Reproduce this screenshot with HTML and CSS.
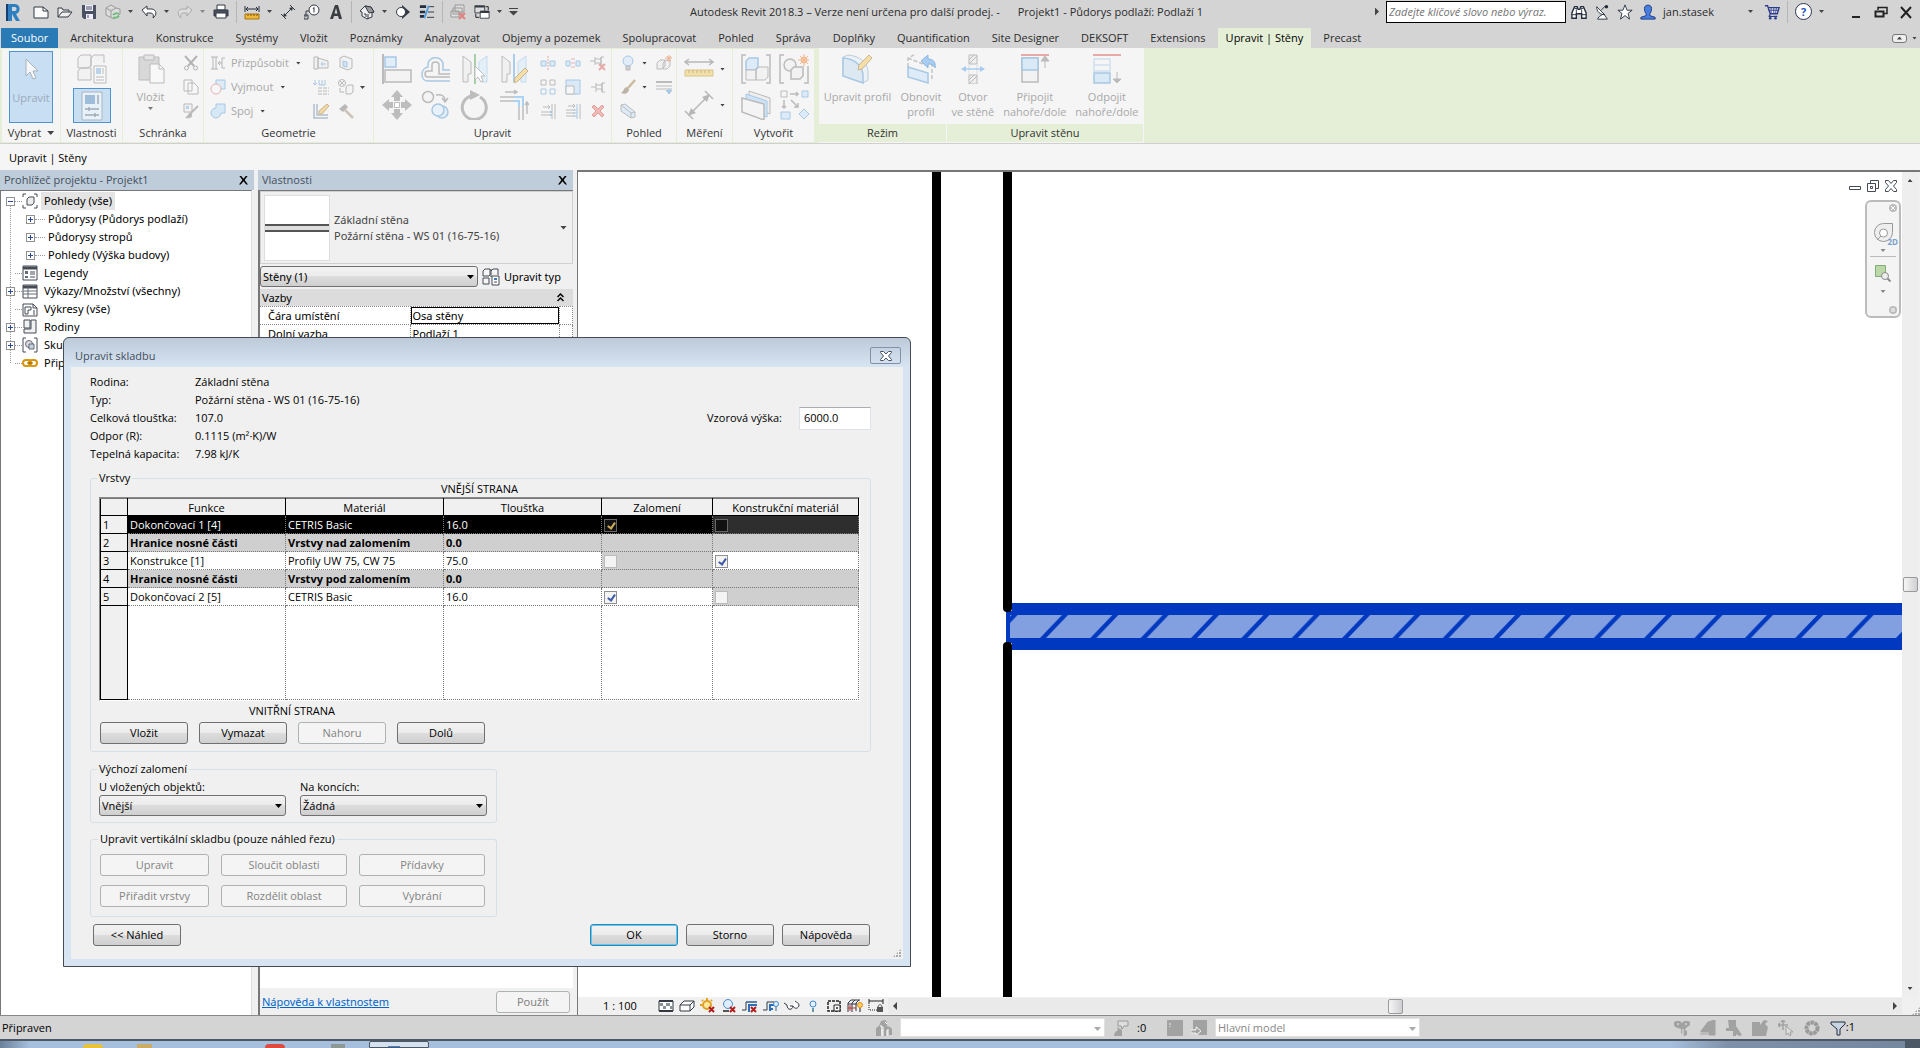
FILE: index.html
```html
<!DOCTYPE html>
<html lang="cs">

<head>
    <meta charset="UTF-8">
    <meta name="viewport" content="width=device-width, initial-scale=1.0">
    <title>Autodesk Revit 2018.3 - Projekt1</title>
    <link rel="stylesheet" href="styles.css">
</head>

<body>
    <!-- Icon symbols -->
    <svg class="sprite" aria-hidden="true">
        <!-- quick access -->
        <symbol id="i-revit" viewBox="0 0 16 18"><path d="M1 1h3v17H1z" fill="#163f70"/><path fill-rule="evenodd" d="M3 1h7c6 0 6 9 1 10l4 7h-4l-4-7v7H3zM7 4v4h3c2 0 2-4 0-4z" fill="#2f7fc1"/></symbol>
        <symbol id="i-new" viewBox="0 0 16 16"><path d="M1 3h9l5 4v7H1z" fill="#fbfbfb" stroke="#333a44"/><path d="M10 3v4h5" fill="none" stroke="#333a44"/></symbol>
        <symbol id="i-open" viewBox="0 0 16 16"><path d="M1 13V4h4l1 2h6v2M1 13l4-5h10l-4 5z" fill="#eee" stroke="#333a44"/></symbol>
        <symbol id="i-save" viewBox="0 0 16 16"><path d="M1 1h14v14H3l-2-2z" fill="#4a5160"/><path d="M4 1h8v6H4zM5 10h7v5H5z" fill="#eef"/><path d="M5 3h6M5 5h6M7 11v3" stroke="#4a5160"/></symbol>
        <symbol id="i-sync" viewBox="0 0 16 16"><path d="M1 4l5-3 5 3 4 1v5l-6 5-8-4zM1 4l5 3 5-3M6 7v6" fill="#ddd" stroke="#999"/><path d="M8 11a4 3 0 0 1 6-1m0 2a4 3 0 0 1-6 1" fill="none" stroke="#74bd80" stroke-width="2"/></symbol>
        <symbol id="i-undo" viewBox="0 0 16 16"><path d="M1 6l5-4v3h5c5 1 5 6 1 9 1-3 0-5-3-5H6v3z" fill="#fff" stroke="#333a44"/></symbol>
        <symbol id="i-redo" viewBox="0 0 16 16"><path d="M15 6l-5-4v3H5c-5 1-5 6-1 9-1-3 0-5 3-5h3v3z" fill="#ddd" stroke="#aaa"/></symbol>
        <symbol id="i-print" viewBox="0 0 16 16"><path d="M4 1h8v5H4z" fill="#fff" stroke="#333a44"/><path d="M1 6h14v6H1z" fill="#4a5160" stroke="#333a44"/><path d="M3 9h10v5H3z" fill="#fff" stroke="#333a44"/></symbol>
        <symbol id="i-measure" viewBox="0 0 16 16"><path d="M1 2v6M15 2v6M2 5h12M4 3L2 5l2 2M12 3l2 2-2 2" fill="none" stroke="#222c3c"/><path d="M1 10h14v5H1z" fill="#f0b83a" stroke="#a87410"/><path d="M4 10v2M7 10v2M10 10v2M13 10v2" stroke="#7a5408"/></symbol>
        <symbol id="i-dim" viewBox="0 0 16 16"><path d="M3 13L13 3M1 10l5 5M10 1l5 5" stroke="#333a44"/><path d="M13 3l-4 1 3 3zM3 13l1-4 3 3z" fill="#333a44"/></symbol>
        <symbol id="i-tag" viewBox="0 0 16 16"><circle cx="10" cy="6" r="5" fill="#fff" stroke="#333a44"/><path d="M5 7H2v6M0 11h4v4H0zM9 5l1-1.500v5" fill="none" stroke="#333a44"/></symbol>
        <symbol id="i-text" viewBox="0 0 16 16"><path d="M2 15L7 1h3l4 14h-3l-1-3H6l-1 3z" fill="#3a3d42"/><path d="M6.500 9.500h3L8 4z" fill="#d4d4d4"/></symbol>
        <symbol id="i-home" viewBox="0 0 16 16"><path d="M1 7l5-5 6 1 3 5-2 1v4l-5 2-5-3V8z" fill="#eee" stroke="#333a44"/><path d="M6 2l4 7 5-1-3-5z" fill="#999" stroke="#333a44"/><path d="M9 10v5M5 10h2v3" fill="none" stroke="#333a44"/></symbol>
        <symbol id="i-section" viewBox="0 0 16 16"><path d="M7 1l8 7-8 7z" fill="#333a44"/><circle cx="6" cy="8" r="4.500" fill="#fff" stroke="#333a44"/></symbol>
        <symbol id="i-thin" viewBox="0 0 18 16"><path d="M1 2h7M1 8h6M1 13h5" stroke="#222c3c" stroke-width="3"/><path d="M11 2h6M10 8h7M9 14h8" stroke="#222c3c"/><path d="M11 1L6 15" stroke="#4a9be0" stroke-width="2"/></symbol>
        <symbol id="i-closehid" viewBox="0 0 16 16"><path d="M5 1h9v7H5zM3 4h9v6H3zM1 7h8v6H1z" fill="#ddd" stroke="#999"/><path d="M9 9l6 6M15 9l-6 6" stroke="#e08080" stroke-width="2"/></symbol>
        <symbol id="i-switch" viewBox="0 0 18 18"><path d="M1 2h11v8H1z" fill="#ddd" stroke="#333a44"/><path d="M7 8h10v8H7z" fill="#fff" stroke="#333a44"/><path d="M1 3h11M7 9h10" stroke="#333a44" stroke-width="2"/><path d="M13 3h3v4M2 11v4h4" fill="none" stroke="#111"/></symbol>
        <!-- title right -->
        <symbol id="i-binoc" viewBox="0 0 18 18"><path d="M1 16v-6l3-7h3l1 3h2l1-3h3l3 7v6h-5v-5H6v5z" fill="#fff" stroke="#222c3c" stroke-width="1.500"/><path d="M1 12h5M12 12h5M4 5h3M11 5h3M6 6v5M12 6v5" stroke="#222c3c"/></symbol>
        <symbol id="i-dish" viewBox="0 0 16 18"><path d="M2 3c0 6 4 9 9 9zM7 7l5-5M3 17h11l-4-6-5 3z" fill="#fff" stroke="#222c3c"/><circle cx="13" cy="3" r="2" fill="#222c3c"/></symbol>
        <symbol id="i-star" viewBox="0 0 18 18"><path d="M9 1l2.300 6H17l-4.500 3.500L14 17l-5-4-5 4 1.500-6.500L1 7h5.700z" fill="#fff" stroke="#222c3c"/></symbol>
        <symbol id="i-user" viewBox="0 0 18 18"><path d="M5 5c0-5 8-5 8 0 0 3-1 5-2 6v2l6 2v2H1v-2l6-2v-2C6 10 5 8 5 5z" fill="#4a7de0" stroke="#16347c"/></symbol>
        <symbol id="i-cart" viewBox="0 0 18 18"><path d="M1 2h3l3 9h8l2-7H5M7 11l-1 3h9" fill="#f4f4ff" stroke="#2c3c86" stroke-width="1.500"/><path d="M8 4v7M11 4v7M14 4l-1 7M5 7h11" stroke="#2c3c86"/><circle cx="7" cy="16" r="1.500" fill="#2c3c86"/><circle cx="13" cy="16" r="1.500" fill="#2c3c86"/></symbol>
        <symbol id="i-minimize" viewBox="0 0 16 16"><path d="M4 13h8" stroke="#222" stroke-width="2"/></symbol>
        <symbol id="i-restore" viewBox="0 0 16 16"><path d="M5 6V3.500h9v6h-3" fill="none" stroke="#222" stroke-width="1.500"/><path d="M2.500 7.500h8v5h-8z" fill="none" stroke="#222" stroke-width="2"/></symbol>
        <symbol id="i-close" viewBox="0 0 16 16"><path d="M3 3l10 11M13 3L3 14" stroke="#222" stroke-width="2"/></symbol>
        <!-- ribbon -->
        <symbol id="r-cursor" viewBox="0 0 30 30"><path d="M10 4v17l4-4 3 7 3-1-3-7h5z" fill="#f4f6f8" stroke="#aab2bb"/></symbol>
        <symbol id="r-type" viewBox="0 0 30 30"><path d="M1 4l3-3h10v10l-3 3H1zM14 4l3-3h10v8M1 17l3-3h10v12H1zM14 4v9" fill="#f2f2f2" stroke="#bbb"/><path d="M17 12h12v17H17z" fill="#f7f7f7" stroke="#bbb"/><path d="M19 14h5v6h-5z" fill="#bcd4ea"/><path d="M26 14v6M19 23h8M19 26h8" stroke="#bbb"/></symbol>
        <symbol id="r-props" viewBox="0 0 30 30"><path d="M5 1h20v28H5z" fill="#e9f1f8" stroke="#a9b6c1"/><path d="M8 4h10v9H8z" fill="#9fbcd8"/><path d="M21 4v9M8 18h14M8 24h14M12 16v4M18 22v4" stroke="#9fadba" stroke-width="1.500"/></symbol>
        <symbol id="r-paste" viewBox="0 0 30 30"><path d="M3 3h20v23H3z" fill="#d8d8d8" stroke="#bbb"/><path d="M8 1h10v5H8z" fill="#e5e5e5" stroke="#bbb"/><path d="M14 10h9l5 5v14H14z" fill="#f8f8f8" stroke="#bbb"/><path d="M23 10v5h5" fill="none" stroke="#bbb"/></symbol>
        <symbol id="r-cut" viewBox="0 0 16 16"><path d="M2 1l9 10M14 1L5 11" stroke="#b4b4b4" stroke-width="2"/><circle cx="3.500" cy="13" r="2" fill="none" stroke="#b4b4b4"/><circle cx="12.500" cy="13" r="2" fill="none" stroke="#b4b4b4"/></symbol>
        <symbol id="r-copy" viewBox="0 0 16 16"><path d="M1 1h8v11H1zM5 4h6l4 4v7H5z" fill="#f7f7f7" stroke="#b8b8b8"/></symbol>
        <symbol id="r-match" viewBox="0 0 16 16"><path d="M1 1h8v8H1z" fill="#f3f3f3" stroke="#b8b8b8"/><path d="M3 3h3v3H3z" fill="#b9d2ea"/><path d="M15 3l-7 7" stroke="#bbb" stroke-width="2"/><path d="M8 9c-3 1-3 4-6 6 4 1 8 0 7-4z" fill="#bbb"/></symbol>
        <symbol id="r-cope" viewBox="0 0 16 16"><path d="M1 2h7M1 14h7M3 2v12M6 2v12M15 3h-3v10h3M8 8h4M10 6L8 8l2 2" fill="none" stroke="#b4b4b4"/></symbol>
        <symbol id="r-cutgeo" viewBox="0 0 16 16"><path d="M6 1h9v9H6z" fill="#dcebf7" stroke="#a8c8e4"/><circle cx="6" cy="10" r="5" fill="#f7f7f7" stroke="#e3b0ae"/></symbol>
        <symbol id="r-join" viewBox="0 0 16 16"><path d="M6 1h9v9h-4a5 5 0 1 1-5-5z" fill="#d6e7f5" stroke="#a8c8e4"/></symbol>
        <symbol id="r-wall" viewBox="0 0 16 16"><path d="M1 2h4v12H1zM5 3l10 3v7H5z" fill="#f1f1f1" stroke="#b8b8b8"/><path d="M13 9H8m2-2L8 9l2 2" fill="none" stroke="#a8c8e4"/></symbol>
        <symbol id="r-opening" viewBox="0 0 16 16"><path d="M2 3l4-2 8 3v9l-4 2-8-3z" fill="#f1f1f1" stroke="#b8b8b8"/><path d="M5 6l4 1v5l-4-1z" fill="#cfe2f3" stroke="#a8c8e4"/></symbol>
        <symbol id="r-beam" viewBox="0 0 16 16"><path d="M2 1v5M0 4l2 2 2-2M6 1v5h6V1M9 1v5" fill="none" stroke="#a8c8e4"/><path d="M5 9h11M5 12h11M5 15h11" stroke="#b8b8b8" stroke-dasharray="4 1"/></symbol>
        <symbol id="r-paint" viewBox="0 0 16 16"><circle cx="4" cy="4" r="3.500" fill="none" stroke="#b8b8b8"/><path d="M2 2l4 4M6 2L2 6M2 9v4h4M8 8l2-2h5v7l-2 2H8z" fill="#f4f4f4" stroke="#b8b8b8"/></symbol>
        <symbol id="r-edit" viewBox="0 0 16 16"><path d="M1 1v14h14M4 1v11h11" fill="none" stroke="#b0bfcc" stroke-width="1.500"/><path d="M14 1l2 2-7 8H6V8z" fill="#f3d8a6" stroke="#cbb48d"/></symbol>
        <symbol id="r-hammer" viewBox="0 0 16 16"><path d="M1 6l6-5 3 3-5 5z" fill="#b8b8b8"/><path d="M7 7l8 8" stroke="#cdc3b6" stroke-width="2.500"/></symbol>
        <symbol id="r-align" viewBox="0 0 30 30"><path d="M1 0v30" stroke="#bbb" stroke-width="2"/><path d="M3 3h11v10H3z" fill="#e1eefa" stroke="#a8c8e4" stroke-width="1.500"/><path d="M3 16h26v12H3z" fill="#f3f3f3" stroke="#bbb" stroke-width="1.500"/></symbol>
        <symbol id="r-offset" viewBox="0 0 30 30"><path d="M29 16h-7V9a8 8 0 0 0-15 0v4c-8 1-8 14 0 14h22" fill="none" stroke="#a8c8e4" stroke-width="1.500"/><path d="M29 20H18v-9c0-4-7-4-7 0v6H7c-4 0-4 6 0 6h22" fill="none" stroke="#bbb" stroke-width="1.500"/></symbol>
        <symbol id="r-mirror" viewBox="0 0 30 30"><path d="M3 2l8 6v12H8v8H3z" fill="#f0f0f0" stroke="#bbb"/><path d="M27 2l-8 6v12h3v8h5z" fill="#e3eff9" stroke="#c5dbef"/><path d="M15 0v30" stroke="#a5cfa6" stroke-width="2"/><path d="M15 12v14l3-3 3 5 2-1-2-5h4z" fill="#fff" stroke="#bbb"/></symbol>
        <symbol id="r-mirrord" viewBox="0 0 30 30"><path d="M3 2l8 6v12H8v8H3z" fill="#f0f0f0" stroke="#bbb"/><path d="M27 2l-8 6v12h3v8h5z" fill="#e3eff9" stroke="#c5dbef"/><path d="M15 0v28" stroke="#a9cdf0" stroke-width="2"/><path d="M26 14l3 3-10 10-4 2 1-5z" fill="#f5dfa8" stroke="#cbb48d"/></symbol>
        <symbol id="r-move" viewBox="0 0 30 30"><path d="M15 0l6 7h-3v4h-6V7H9zM15 30l6-7h-3v-4h-6v4H9zM0 15l7-6v3h4v6H7v3zM30 15l-7-6v3h-4v6h4v3z" fill="#bdbdbd"/><path d="M12.500 12.500h5v5h-5z" fill="#fff" stroke="#bdbdbd"/></symbol>
        <symbol id="r-copy2" viewBox="0 0 30 30"><circle cx="7" cy="7" r="5.500" fill="#f4f4f4" stroke="#bbb" stroke-width="1.500"/><path d="M15 5c6-1 9 1 9 6M21 8l3 4 3-4" fill="none" stroke="#bbb" stroke-width="1.500"/><circle cx="21" cy="22" r="6" fill="#e1eefa" stroke="#a8c8e4" stroke-width="1.500"/><circle cx="17" cy="20" r="6" fill="#e8f1fa" stroke="#a8c8e4" stroke-width="1.500"/></symbol>
        <symbol id="r-rotate" viewBox="0 0 30 30"><path d="M20 7a12 12 0 1 1-9-1" fill="none" stroke="#bdbdbd" stroke-width="3"/><path d="M10 0l10 5-10 5z" fill="#bdbdbd"/></symbol>
        <symbol id="r-trim" viewBox="0 0 30 30"><path d="M1 7h15M1 11h15M24 16v14M20 16v14" stroke="#bdbdbd" stroke-width="1.500"/><path d="M15 7h9v9M15 11h5v6" fill="none" stroke="#a9d2f3" stroke-width="2"/><path d="M6 2h12M15 0l3 2-3 2M28 24V12M26 15l2-3 2 3" fill="none" stroke="#bdbdbd" stroke-width="1.500"/></symbol>
        <symbol id="r-split" viewBox="0 0 16 16"><path d="M1 6h5v5H1zM10 6h5v5h-5z" fill="#dcebf7" stroke="#a8c8e4"/><path d="M8 1v15" stroke="#e3a5a3" stroke-dasharray="2 1"/></symbol>
        <symbol id="r-gap" viewBox="0 0 16 16"><path d="M1 6h4v5H1zM11 6h4v5h-4z" fill="#dcebf7" stroke="#a8c8e4"/><path d="M7 3v11M9 3v11" stroke="#e3b5b3" stroke-dasharray="2 2"/></symbol>
        <symbol id="r-unpin" viewBox="0 0 16 16"><path d="M0 6h5M5 2v8M11 2v8M5 4h6M5 8h6M14 2h-3v8h3" fill="none" stroke="#bbb"/><path d="M9 9l6 6M15 9l-6 6" stroke="#e7aaa8" stroke-width="2"/></symbol>
        <symbol id="r-array" viewBox="0 0 16 16"><path d="M1 1h5v5H1zM10 1h5v5h-5z" fill="none" stroke="#bbb"/><path d="M1 10h5v5H1zM10 10h5v5h-5z" fill="none" stroke="#a8c8e4"/></symbol>
        <symbol id="r-scale" viewBox="0 0 16 16"><path d="M1 1h14v14H1z" fill="#d9e9f6" stroke="#a8c8e4"/><path d="M1 7h8v8H1z" fill="#f7f7f7" stroke="#bbb"/></symbol>
        <symbol id="r-pin" viewBox="0 0 16 16"><path d="M1 8h5M6 4v9M12 4v9M6 6h6M6 10h6M15 4h-3v9h3" fill="none" stroke="#bbb"/></symbol>
        <symbol id="r-trim1" viewBox="0 0 16 16"><path d="M3 4h7M8 2l2 2-2 2M1 9h9M1 12h9M12 1v15M15 1v15" fill="none" stroke="#bbb"/><path d="M10 9h2M10 12h2" stroke="#a8c8e4" stroke-width="2"/></symbol>
        <symbol id="r-trim2" viewBox="0 0 16 16"><path d="M3 3h7M8 1l2 2-2 2M1 7h9M1 10h9M1 13h9M15 1v15" fill="none" stroke="#bbb"/><path d="M8 7h4M8 10h4M8 13h4M12 1v15" stroke="#a8c8e4"/></symbol>
        <symbol id="r-delete" viewBox="0 0 16 16"><path d="M2 4l2-2 4 4 4-4 2 2-4 4 4 4-2 2-4-4-4 4-2-2 4-4z" fill="#f2b8b6" stroke="#dfa09e"/></symbol>
        <symbol id="r-bulb" viewBox="0 0 16 16"><circle cx="8" cy="6" r="5" fill="#e1eefa" stroke="#a8c8e4"/><path d="M6 11h4v4H6z" fill="#d0d0d0" stroke="#bbb"/></symbol>
        <symbol id="r-box" viewBox="0 0 16 16"><path d="M1 8l3-3h5v6l-3 3H1zM7 8l3-3h4v6l-3 3H7z" fill="#f0f0f0" stroke="#bbb"/><path d="M13 0v7M9 3h7M11 1l4 5M15 1l-4 5" stroke="#eeb295"/></symbol>
        <symbol id="r-brush" viewBox="0 0 16 16"><path d="M15 1L8 9" stroke="#cdbb9f" stroke-width="2.500"/><path d="M7 8c-3 0-3 4-6 6 4 2 8 0 8-4z" fill="#bdb3a6"/></symbol>
        <symbol id="r-lines" viewBox="0 0 16 16"><path d="M0 3h16" stroke="#bbb" stroke-width="2"/><path d="M0 7h16M0 10h16" stroke="#bbb"/><path d="M13 9v4M10 11l3 4 3-4" fill="#a8c8e4" stroke="#a8c8e4"/></symbol>
        <symbol id="r-crop" viewBox="0 0 16 16"><path d="M1 2l4-1 10 8v5l-4 1L1 8z" fill="#dcebf7" stroke="#bbb"/><path d="M1 2l10 8v5M11 10l4-1" fill="none" stroke="#bbb"/></symbol>
        <symbol id="r-meas" viewBox="0 0 30 30"><path d="M1 8h28M5 5L1 8l4 3M25 5l4 3-4 3" fill="none" stroke="#b8b8b8" stroke-width="1.500"/><path d="M1 16h28v6H1z" fill="#f4e0ab" stroke="#d9c389"/><path d="M5 16v3M9 16v3M13 16v3M17 16v3M21 16v3M25 16v3" stroke="#c9b37b"/></symbol>
        <symbol id="r-dim" viewBox="0 0 30 30"><path d="M6 24L24 6M1 21l8 8M21 1l8 8" stroke="#b8b8b8" stroke-width="1.500"/><path d="M26 4l-8 3 5 5zM4 26l3-8 5 5z" fill="#b8b8b8"/></symbol>
        <symbol id="r-asm" viewBox="0 0 30 30"><path d="M5 1H1v28h4M25 1h4v28h-4" fill="none" stroke="#bbb" stroke-width="1.500"/><path d="M5 7l3-3h9v9l-3 3H5z" fill="#dcebf7" stroke="#a8c8e4" stroke-width="1.500"/><path d="M5 16h10v10H5zM15 16l3-3h9v10l-3 3h-9z" fill="#f2f2f2" stroke="#bbb"/></symbol>
        <symbol id="r-group" viewBox="0 0 30 30"><path d="M5 1H1v28h4M25 29h4V12" fill="none" stroke="#bbb" stroke-width="1.500"/><circle cx="11" cy="11" r="6" fill="#f2f2f2" stroke="#bbb" stroke-width="1.500"/><path d="M12 16l3-3h9v9l-3 3h-9z" fill="#f2f2f2" stroke="#bbb" stroke-width="1.500"/><circle cx="25" cy="6" r="3" fill="#f8e2b4" stroke="#efb892"/><path d="M25 0v12M19 6h12M21 2l8 8M29 2l-8 8" stroke="#efb892"/></symbol>
        <symbol id="r-parts" viewBox="0 0 30 30"><path d="M8 1l21 7v16l-21-8z" fill="#eee" stroke="#bbb"/><path d="M5 4l21 7v16L5 20z" fill="#cfe3f6" stroke="#a8c8e4"/><path d="M1 8l22 6v16L1 22z" fill="#f4f4f4" stroke="#bbb" stroke-width="1.500"/></symbol>
        <symbol id="r-similar" viewBox="0 0 30 30"><path d="M2 1h6v6H2z" fill="none" stroke="#bbb"/><path d="M23 1h6v6h-6zM2 22h9v7H2zM25 19l5 5-5 5-5-5z" fill="#dcebf7" stroke="#a8c8e4"/><path d="M11 4h8M17 2l2 2-2 2M5 10v8M3 16l2 2 2-2M12 10l7 7M19 13v4h-4" fill="none" stroke="#bbb" stroke-width="1.500"/></symbol>
        <symbol id="r-profile" viewBox="0 0 30 30"><path d="M1 3l5-2c12 1 20 8 20 17v8l-5 3L1 22z" fill="#eaf1f7" stroke="#c0ccd6"/><path d="M1 4c12 1 20 8 20 18v7L1 22z" fill="#dce8f2" stroke="#a8c8e4" stroke-width="1.500"/><path d="M27 1l3 3-10 11-4 1 1-5z" fill="#f5dfa8" stroke="#cbb48d"/></symbol>
        <symbol id="r-reset" viewBox="0 0 30 30"><path d="M2 13V4l6-3M2 4l20 8M26 9v16" fill="none" stroke="#c4c4c4" stroke-width="1.500" stroke-dasharray="4 2"/><path d="M2 13l20 6v10L2 23z" fill="#dcebf7" stroke="#a8c8e4" stroke-width="1.500"/><path d="M15 7l7-6v4c6 0 8 4 7 9-1-3-3-4-7-4v4z" fill="#a9cdf0" stroke="#8ab8e2"/></symbol>
        <symbol id="r-wallopen" viewBox="0 0 30 30"><path d="M11 1h8v9h-8zM11 21h8v9h-8z" fill="#eee" stroke="#bbb"/><path d="M11 6l5-5M11 10l8-8M11 26l5-5M11 30l8-8" stroke="#bbb"/><path d="M11 10v11M19 10v11" stroke="#ddd"/><path d="M4 15h22" stroke="#a9cdf0" stroke-width="1.500"/><path d="M3 15l5-3v6zM27 15l-5-3v6z" fill="#a9cdf0"/></symbol>
        <symbol id="r-attach" viewBox="0 0 30 30"><path d="M1 1h28" stroke="#e8aaa8" stroke-width="2"/><path d="M2 4h16v24H2z" fill="#f2f2f2" stroke="#bbb" stroke-width="1.500"/><path d="M2 4h16v12H2z" fill="#d9e9f6" stroke="#a8c8e4" stroke-width="1.500"/><path d="M25 14V4M21 7l4-5 4 5z" fill="#bbb" stroke="#bbb"/></symbol>
        <symbol id="r-detach" viewBox="0 0 30 30"><path d="M1 1h28" stroke="#e8aaa8" stroke-width="2"/><path d="M2 5h16v6H2zM2 11h16v6H2z" fill="none" stroke="#cfdfee" stroke-width="1.500"/><path d="M2 19h16v10H2z" fill="#d9e9f6" stroke="#a8c8e4" stroke-width="1.500"/><path d="M25 18v9M21 25l4 4 4-4z" fill="#bbb" stroke="#bbb"/></symbol>
        <!-- project browser -->
        <symbol id="t-views" viewBox="0 0 16 16"><path d="M4 1H1v3M12 1h3v3M4 15H1v-3M12 15h3v-3" fill="none" stroke="#444b55"/><path d="M5 6l2-2h5v6l-2 2H5z" fill="#eee" stroke="#444b55"/></symbol>
        <symbol id="t-legend" viewBox="0 0 16 16"><path d="M1 1h14v14H1z" fill="#fff" stroke="#444b55"/><path d="M1 3h14" stroke="#444b55" stroke-width="3"/><path d="M3 6h3v3H3zM3 11h3v2H3z" fill="#666e79"/><path d="M8 7h5M8 9h5M8 12h5" stroke="#444b55"/></symbol>
        <symbol id="t-sched" viewBox="0 0 16 16"><path d="M1 2h14v13H1z" fill="#fff" stroke="#444b55"/><path d="M1 4h14" stroke="#444b55" stroke-width="3"/><path d="M1 8h14M1 11h14M6 4v11" stroke="#666e79"/></symbol>
        <symbol id="t-sheet" viewBox="0 0 16 16"><path d="M1 3h10l4 4v8H1z" fill="#fff" stroke="#444b55"/><path d="M3 6h6v3H6v4H3zM11 3v4h4M12 9v5" fill="none" stroke="#444b55"/></symbol>
        <symbol id="t-family" viewBox="0 0 16 16"><path d="M2 1h6v8H2zM9 1h5v13H2v-4h7z" fill="#f2f2f2" stroke="#444b55"/></symbol>
        <symbol id="t-group" viewBox="0 0 16 16"><path d="M4 1H1v14h3M12 1h3v14h-3" fill="none" stroke="#444b55"/><circle cx="7" cy="7" r="3.500" fill="#ddd" stroke="#667"/><path d="M7 7h5v5H7z" fill="#c5d3e0" stroke="#667"/></symbol>
        <symbol id="t-link" viewBox="0 0 16 16"><rect x="1" y="5" width="8" height="6" rx="3" fill="none" stroke="#d9960a" stroke-width="2"/><rect x="7" y="5" width="8" height="6" rx="3" fill="none" stroke="#d9960a" stroke-width="2"/><path d="M5 8h6" stroke="#8a5c00"/></symbol>
        <symbol id="t-edittype" viewBox="0 0 18 18"><path d="M1 3l2-2h5v6L7 8H1zM9 3l2-2h5v6M1 10h6v6H1zM9 1v8" fill="#f6f6f6" stroke="#444b55"/><path d="M10 8h7v9h-7z" fill="#fff" stroke="#444b55"/><path d="M12 10h3v2h-3z" fill="#3f78c0"/><path d="M12 14h3" stroke="#444b55"/></symbol>
        <!-- view controls -->
        <symbol id="v-detail" viewBox="0 0 16 16"><path d="M1 3h14v10H1z" fill="#fff" stroke="#333a44"/><path d="M1 5h4v3h3V5h4v3h3v3h-3V8H8v3H5V8H1z" fill="#8a9098"/><path d="M1 3h14M1 13h14" stroke="#333a44" stroke-width="2"/></symbol>
        <symbol id="v-style" viewBox="0 0 16 16"><path d="M1 7l4-4h10v6l-4 4H1zM1 7h10v6M11 7l4-4" fill="#fff" stroke="#333a44"/></symbol>
        <symbol id="v-sun" viewBox="0 0 16 16"><circle cx="7" cy="7" r="4" fill="#ffe9a0" stroke="#e0a020" stroke-width="2"/><path d="M7 0v2M0 7h2M2 2l1 1M12 2l-1 1" stroke="#e0a020" stroke-width="2"/><path d="M9 9l5 5M14 9l-5 5" stroke="#b51d1d" stroke-width="2"/></symbol>
        <symbol id="v-shadow" viewBox="0 0 16 16"><circle cx="7" cy="6" r="4.500" fill="#dceeff" stroke="#4a8bc8"/><path d="M2 13h6" stroke="#555" stroke-width="2"/><path d="M9 9l5 5M14 9l-5 5" stroke="#b51d1d" stroke-width="2"/></symbol>
        <symbol id="v-crop" viewBox="0 0 16 16"><path d="M0 12h4V4h11" fill="none" stroke="#333a44"/><path d="M7 14V7h8" fill="none" stroke="#2a70b8" stroke-width="2"/><path d="M4 4h11" stroke="#2a70b8"/><path d="M9 9l5 5M14 9l-5 5" stroke="#b51d1d" stroke-width="2"/></symbol>
        <symbol id="v-cropvis" viewBox="0 0 16 16"><path d="M0 12h4V4h7" fill="none" stroke="#333a44"/><path d="M7 13V7h4M7 11h3" fill="none" stroke="#2a70b8" stroke-width="2"/><circle cx="13" cy="6" r="2.500" fill="#e4f2ff" stroke="#3b86cc"/><path d="M12 9h2v4h-2z" fill="#9ab"/></symbol>
        <symbol id="v-glasses" viewBox="0 0 16 16"><path d="M0 5l3 2c0 6 6 5 6 1L6 8m3 0c2 4 6 2 6-1 0-2-2-2-4-4" fill="#fff" stroke="#333a44"/></symbol>
        <symbol id="v-bulb" viewBox="0 0 16 16"><circle cx="8" cy="6" r="3" fill="#e4f2ff" stroke="#3b86cc"/><path d="M7 10h2v4H7z" fill="#69a"/></symbol>
        <symbol id="v-temp" viewBox="0 0 16 16"><path d="M2 3h12v10H2z" fill="none" stroke="#222" stroke-width="1.500" stroke-dasharray="3 1"/><path d="M8 7h6v6H8z" fill="#fff" stroke="#222"/><circle cx="11" cy="10" r="1" fill="#222"/></symbol>
        <symbol id="v-anal" viewBox="0 0 16 16"><path d="M1 14V5l3-3h9M5 14V5l3-3M9 13V5l3-3M1 6h9" fill="none" stroke="#333a44"/><path d="M1 10h8M3 7v6" stroke="#c03030"/><circle cx="13" cy="7" r="2.500" fill="#ffd25a" stroke="#e08a20"/><path d="M12 10h2v4h-2z" fill="#888"/></symbol>
        <symbol id="v-constr" viewBox="0 0 16 16"><path d="M1 3h14M1 1v5M15 1v5" stroke="#222"/><path d="M1 7v5h8" fill="none" stroke="#222" stroke-dasharray="1 1"/><path d="M9 9h6v5H9z" fill="#555"/><path d="M10 9c0-3 4-3 4 0" fill="none" stroke="#555"/></symbol>
        <!-- status bar -->
        <symbol id="s-house" viewBox="0 0 16 16"><path d="M0 15V8l3-2 2-5 4-1 2 2v4l3 1 2 2v6h-3V9h-2v7H8V7H5v9H0z" fill="#a2a2a2"/><path d="M4 6h2v2M9 2l2 2M11 10v6M6 9v7" fill="none" stroke="#fff"/></symbol>
        <symbol id="s-req" viewBox="0 0 16 16"><path d="M5 1h10v5h-4l-2 3-1-3H5z" fill="#ddd" stroke="#999"/><path d="M1 16c0-3 2-5 4-6l-1-3 5 3v6z" fill="#a2a2a2"/></symbol>
        <symbol id="s-opt" viewBox="0 0 16 16"><rect width="16" height="16" rx="1" fill="#a2a2a2"/><path d="M3 3v2M3 6v1" stroke="#eee"/></symbol>
        <symbol id="s-add" viewBox="0 0 16 16"><path d="M2 0h14v15H7l3-4-5-5v3H2z" fill="#a2a2a2"/><path d="M0 10h5V7l5 4-5 4v-2H0z" fill="#a2a2a2" stroke="#eee"/></symbol>
        <symbol id="s-sel1" viewBox="0 0 16 16"><path d="M0 2l2-1h4l2 2 2-2h4l2 1v3l-4 3-1 2 2 1v4l-3 1-3-3V9L1 7 0 5z" fill="#a2a2a2"/><path d="M3 4h2M11 4h2M9 9v6" stroke="#eee"/></symbol>
        <symbol id="s-sel2" viewBox="0 0 16 16"><path d="M1 11l7-9 7-2v15H9v-3H1zM0 14h8" fill="#a2a2a2" stroke="#a2a2a2"/></symbol>
        <symbol id="s-sel3" viewBox="0 0 16 16"><path d="M2 0h8v6l6 9-3 1-3-2v2H7v-5H0V8h3z" fill="#a2a2a2"/></symbol>
        <symbol id="s-sel4" viewBox="0 0 16 16"><path d="M0 2h8v3l4-5 4 1-3 3 3 3-2 9H0z" fill="#a2a2a2"/></symbol>
        <symbol id="s-sel5" viewBox="0 0 16 16"><path d="M5 0v10M0 5h10M3 2l2-2 2 2M2 3L0 5l2 2" fill="none" stroke="#a2a2a2" stroke-width="1.500"/><path d="M8 6v9l2-2 2 3 1-1-1-3h3z" fill="#ddd" stroke="#a2a2a2"/></symbol>
        <symbol id="s-gear" viewBox="0 0 16 16"><circle cx="8" cy="8" r="5.500" fill="none" stroke="#bbb" stroke-width="3"/><circle cx="8" cy="8" r="5.500" fill="none" stroke="#999" stroke-width="4" stroke-dasharray="3 1"/></symbol>
        <symbol id="s-filter" viewBox="0 0 16 16"><path d="M1 2h14v2l-5 5v6H7V9L1 4z" fill="#c9d4e2" stroke="#222c3c"/></symbol>
    </svg>

    <header class="titlebar">
        <svg class="ico logo"><use href="#i-revit"/></svg>
        <div class="quick">
            <svg class="ico"><use href="#i-new"/></svg>
            <svg class="ico"><use href="#i-open"/></svg>
            <svg class="ico"><use href="#i-save"/></svg>
            <svg class="ico"><use href="#i-sync"/></svg>
            <i class="caret"></i>
            <svg class="ico"><use href="#i-undo"/></svg>
            <i class="caret"></i>
            <svg class="ico"><use href="#i-redo"/></svg>
            <i class="caret dim"></i>
            <svg class="ico"><use href="#i-print"/></svg>
            <i class="vsep"></i>
            <svg class="ico"><use href="#i-measure"/></svg>
            <i class="caret"></i>
            <svg class="ico"><use href="#i-dim"/></svg>
            <svg class="ico"><use href="#i-tag"/></svg>
            <svg class="ico"><use href="#i-text"/></svg>
            <i class="vsep"></i>
            <svg class="ico"><use href="#i-home"/></svg>
            <i class="caret"></i>
            <svg class="ico"><use href="#i-section"/></svg>
            <svg class="ico"><use href="#i-thin"/></svg>
            <i class="vsep"></i>
            <svg class="ico"><use href="#i-closehid"/></svg>
            <svg class="ico"><use href="#i-switch"/></svg>
            <i class="caret"></i>
            <i class="caret barred"></i>
        </div>
        <h1 class="app-title"><span>Autodesk Revit 2018.3 – Verze není určena pro další prodej. -</span><span>Projekt1 - Půdorys podlaží: Podlaží 1</span></h1>
        <div class="title-right">
            <i class="caret right"></i>
            <input class="search" type="text" placeholder="Zadejte klíčové slovo nebo výraz." aria-label="Hledat">
            <svg class="ico"><use href="#i-binoc"/></svg>
            <svg class="ico"><use href="#i-dish"/></svg>
            <svg class="ico"><use href="#i-star"/></svg>
            <svg class="ico"><use href="#i-user"/></svg>
            <span class="user-name">jan.stasek</span>
            <i class="caret"></i>
            <svg class="ico cart"><use href="#i-cart"/></svg>
            <i class="vsep"></i>
            <button class="help" type="button">?</button>
            <i class="caret"></i>
        </div>
        <div class="window-buttons">
            <svg class="ico"><use href="#i-minimize"/></svg>
            <svg class="ico"><use href="#i-restore"/></svg>
            <svg class="ico"><use href="#i-close"/></svg>
        </div>
    </header>

    <nav class="tabs">
        <button class="tab file" type="button">Soubor</button>
        <button class="tab" type="button">Architektura</button>
        <button class="tab" type="button">Konstrukce</button>
        <button class="tab" type="button">Systémy</button>
        <button class="tab" type="button">Vložit</button>
        <button class="tab" type="button">Poznámky</button>
        <button class="tab" type="button">Analyzovat</button>
        <button class="tab" type="button">Objemy a pozemek</button>
        <button class="tab" type="button">Spolupracovat</button>
        <button class="tab" type="button">Pohled</button>
        <button class="tab" type="button">Správa</button>
        <button class="tab" type="button">Doplňky</button>
        <button class="tab" type="button">Quantification</button>
        <button class="tab" type="button">Site Designer</button>
        <button class="tab" type="button">DEKSOFT</button>
        <button class="tab" type="button">Extensions</button>
        <button class="tab active" type="button">Upravit | Stěny</button>
        <button class="tab" type="button">Precast</button>
        <span class="collapse"><i class="caret up"></i></span>
        <i class="caret"></i>
    </nav>

    <section class="ribbon">
        <div class="panel p-select">
            <div class="panel-body">
                <button class="big-btn selected" type="button"><svg class="ico30"><use href="#r-cursor"/></svg>Upravit</button>
            </div>
            <div class="panel-title">Vybrat <i class="caret wide"></i></div>
        </div>
        <div class="panel p-props">
            <div class="panel-body">
                <div class="col2">
                    <svg class="ico30"><use href="#r-type"/></svg>
                    <span class="toggle-on"><svg class="ico30"><use href="#r-props"/></svg></span>
                </div>
            </div>
            <div class="panel-title">Vlastnosti</div>
        </div>
        <div class="panel p-clip">
            <div class="panel-body">
                <button class="big-btn" type="button"><svg class="ico30"><use href="#r-paste"/></svg>Vložit<i class="caret"></i></button>
                <div class="col3">
                    <svg class="ico"><use href="#r-cut"/></svg>
                    <svg class="ico"><use href="#r-copy"/></svg>
                    <svg class="ico"><use href="#r-match"/></svg>
                </div>
            </div>
            <div class="panel-title">Schránka</div>
        </div>
        <div class="panel p-geom">
            <div class="panel-body">
                <div class="col3 labelled">
                    <button class="row-btn" type="button"><svg class="ico"><use href="#r-cope"/></svg>Přizpůsobit<i class="caret"></i></button>
                    <button class="row-btn" type="button"><svg class="ico"><use href="#r-cutgeo"/></svg>Vyjmout<i class="caret"></i></button>
                    <button class="row-btn" type="button"><svg class="ico"><use href="#r-join"/></svg>Spoj<i class="caret"></i></button>
                </div>
                <div class="col3">
                    <svg class="ico"><use href="#r-wall"/></svg>
                    <svg class="ico"><use href="#r-beam"/></svg>
                    <svg class="ico"><use href="#r-edit"/></svg>
                </div>
                <div class="col3">
                    <svg class="ico"><use href="#r-opening"/></svg>
                    <svg class="ico"><use href="#r-paint"/></svg>
                    <svg class="ico"><use href="#r-hammer"/></svg>
                </div>
                <i class="caret mid"></i>
            </div>
            <div class="panel-title">Geometrie</div>
        </div>
        <div class="panel p-modify">
            <div class="panel-body">
                <div class="col2 four">
                    <svg class="ico30"><use href="#r-align"/></svg>
                    <svg class="ico30"><use href="#r-offset"/></svg>
                    <svg class="ico30"><use href="#r-mirror"/></svg>
                    <svg class="ico30"><use href="#r-mirrord"/></svg>
                    <svg class="ico30"><use href="#r-move"/></svg>
                    <svg class="ico30"><use href="#r-copy2"/></svg>
                    <svg class="ico30"><use href="#r-rotate"/></svg>
                    <svg class="ico30"><use href="#r-trim"/></svg>
                </div>
                <div class="col3 three">
                    <svg class="ico"><use href="#r-split"/></svg>
                    <svg class="ico"><use href="#r-gap"/></svg>
                    <svg class="ico"><use href="#r-unpin"/></svg>
                    <svg class="ico"><use href="#r-array"/></svg>
                    <svg class="ico"><use href="#r-scale"/></svg>
                    <svg class="ico"><use href="#r-pin"/></svg>
                    <svg class="ico"><use href="#r-trim1"/></svg>
                    <svg class="ico"><use href="#r-trim2"/></svg>
                    <svg class="ico"><use href="#r-delete"/></svg>
                </div>
            </div>
            <div class="panel-title">Upravit</div>
        </div>
        <div class="panel p-view">
            <div class="panel-body">
                <div class="col3 drop">
                    <span><svg class="ico"><use href="#r-bulb"/></svg><i class="caret"></i></span>
                    <span><svg class="ico"><use href="#r-brush"/></svg><i class="caret"></i></span>
                    <span><svg class="ico"><use href="#r-crop"/></svg></span>
                </div>
                <div class="col3">
                    <svg class="ico"><use href="#r-box"/></svg>
                    <svg class="ico"><use href="#r-lines"/></svg>
                </div>
            </div>
            <div class="panel-title">Pohled</div>
        </div>
        <div class="panel p-measure">
            <div class="panel-body">
                <div class="col2 drop">
                    <span><svg class="ico30"><use href="#r-meas"/></svg><i class="caret"></i></span>
                    <span><svg class="ico30"><use href="#r-dim"/></svg><i class="caret"></i></span>
                </div>
            </div>
            <div class="panel-title">Měření</div>
        </div>
        <div class="panel p-create">
            <div class="panel-body">
                <div class="col2 two">
                    <svg class="ico30"><use href="#r-asm"/></svg>
                    <svg class="ico30"><use href="#r-group"/></svg>
                    <svg class="ico30"><use href="#r-parts"/></svg>
                    <svg class="ico30"><use href="#r-similar"/></svg>
                </div>
            </div>
            <div class="panel-title">Vytvořit</div>
        </div>
        <div class="panel context p-mode">
            <div class="panel-body">
                <button class="big-btn" type="button"><svg class="ico30"><use href="#r-profile"/></svg>Upravit profil</button>
                <button class="big-btn" type="button"><svg class="ico30"><use href="#r-reset"/></svg>Obnovit<br>profil</button>
            </div>
            <div class="panel-title">Režim</div>
        </div>
        <div class="panel context p-wall">
            <div class="panel-body">
                <button class="big-btn" type="button"><svg class="ico30"><use href="#r-wallopen"/></svg>Otvor<br>ve stěně</button>
                <button class="big-btn" type="button"><svg class="ico30"><use href="#r-attach"/></svg>Připojit<br>nahoře/dole</button>
                <button class="big-btn" type="button"><svg class="ico30"><use href="#r-detach"/></svg>Odpojit<br>nahoře/dole</button>
            </div>
            <div class="panel-title">Upravit stěnu</div>
        </div>
    </section>

    <div class="options-bar">Upravit | Stěny</div>

    <main class="workspace">
        <!-- Project browser -->
        <aside class="dock browser">
            <h2 class="dock-title">Prohlížeč projektu - Projekt1<button class="x" type="button" aria-label="Zavřít"></button></h2>
            <ul class="tree">
                <li><i class="exp open"></i><i class="dots"></i><svg class="ico"><use href="#t-views"/></svg><span class="current">Pohledy (vše)</span></li>
                <li class="sub"><i class="exp"></i><i class="dots"></i><span>Půdorysy (Půdorys podlaží)</span></li>
                <li class="sub"><i class="exp"></i><i class="dots"></i><span>Půdorysy stropů</span></li>
                <li class="sub"><i class="exp"></i><i class="dots"></i><span>Pohledy (Výška budovy)</span></li>
                <li><i class="noexp"></i><i class="dots"></i><svg class="ico"><use href="#t-legend"/></svg><span>Legendy</span></li>
                <li><i class="exp"></i><i class="dots"></i><svg class="ico"><use href="#t-sched"/></svg><span>Výkazy/Množství (všechny)</span></li>
                <li><i class="noexp"></i><i class="dots"></i><svg class="ico"><use href="#t-sheet"/></svg><span>Výkresy (vše)</span></li>
                <li><i class="exp"></i><i class="dots"></i><svg class="ico"><use href="#t-family"/></svg><span>Rodiny</span></li>
                <li><i class="exp"></i><i class="dots"></i><svg class="ico"><use href="#t-group"/></svg><span>Skupiny</span></li>
                <li><i class="noexp"></i><i class="dots"></i><svg class="ico"><use href="#t-link"/></svg><span>Připojení</span></li>
            </ul>
        </aside>

        <!-- Properties -->
        <aside class="dock properties">
            <h2 class="dock-title">Vlastnosti<button class="x" type="button" aria-label="Zavřít"></button></h2>
            <div class="props-body">
                <div class="type-box">
                    <div class="thumb"></div>
                    <p>Základní stěna<br>Požární stěna - WS 01 (16-75-16)</p>
                    <i class="caret wide"></i>
                </div>
                <div class="filter-row">
                    <span class="combo"><select aria-label="Filtr"><option>Stěny (1)</option></select></span>
                    <button class="edit-type" type="button"><svg class="ico18"><use href="#t-edittype"/></svg>Upravit typ</button>
                </div>
                <div class="group-head">Vazby<svg width="7" height="9"><path d="M.5 4l3-3 3 3M.5 8l3-3 3 3" fill="none" stroke="#000" stroke-width="1.500"/></svg></div>
                <table class="props-table">
                    <tr><th scope="row">Čára umístění</th><td class="editing">Osa stěny</td><td></td></tr>
                    <tr><th scope="row">Dolní vazba</th><td>Podlaží 1</td><td></td></tr>
                </table>
                <div class="props-footer">
                    <a href="#">Nápověda k vlastnostem</a>
                    <button class="btn" type="button" disabled>Použít</button>
                </div>
            </div>
        </aside>

        <!-- Drawing view -->
        <section class="view">
            <div class="canvas">
                <svg class="drawing" width="100%" height="100%">
                    <defs>
                        <pattern id="hatch" x="462" y="443" width="50.350" height="23" patternUnits="userSpaceOnUse">
                            <rect width="51" height="23" fill="#829fe0"/>
                            <path d="M0 23L22 0h6L6 23z" fill="#0039c0"/>
                        </pattern>
                    </defs>
                    <rect x="354" y="0" width="9" height="100%"/>
                    <rect x="434" y="431" width="100%" height="47" fill="#0039c0"/>
                    <rect x="428" y="439" width="6" height="32" fill="#0039c0"/>
                    <rect x="432" y="443" width="100%" height="23" fill="url(#hatch)"/>
                    <rect x="425" y="-10" width="9" height="450" rx="4"/>
                    <rect x="425" y="470" width="9" height="100%" rx="4"/>
                </svg>
                <div class="view-buttons">
                    <svg width="12" height="12"><path d="M.5 6.500h11v3H.5z" fill="#fff" stroke="#444b55"/></svg>
                    <svg width="12" height="12"><path d="M3.500 3V.5h8v8H9M.5 3.500h8v8h-8zM3.500 6.500h2v2h-2z" fill="#fff" stroke="#444b55"/></svg>
                    <svg width="12" height="12"><path d="M.5.500h3L6 3.500 8.500.5h3v2L8.500 6l3 3.500v2h-3L6 8.500 3.500 11.500h-3v-2L3.500 6l-3-3.500z" fill="#fff" stroke="#444b55"/></svg>
                </div>
                <div class="navbar">
                    <i class="nav-dot"><svg width="8" height="8"><path d="M2 2l4 4M6 2L2 6" stroke="#fff"/></svg></i>
                    <div class="wheel">
                        <svg width="20" height="22"><path d="M10.500 2.500h9v9a9 9 0 1 1-9-9z" fill="#eee" stroke="#999"/><circle cx="10.500" cy="12" r="4" fill="#fff" stroke="#999"/><path d="M4 19l4-4" stroke="#999"/></svg>
                        <span>2D</span>
                    </div>
                    <i class="caret"></i>
                    <hr>
                    <svg class="zoom" width="18" height="18"><path d="M1.500 1.500h10v11h-10z" fill="#bdd8a8" stroke="#7fae7a"/><circle cx="11" cy="12" r="3.500" fill="#eee" stroke="#8a8a8a"/><path d="M13.500 14.500l3 3" stroke="#8a8a8a" stroke-width="2"/></svg>
                    <i class="caret"></i>
                    <i class="nav-dot last"><svg width="8" height="8"><path d="M2 3h4M2 5h4" stroke="#fff"/></svg></i>
                </div>
            </div>
            <div class="vscroll"><i class="caret up"></i><i class="grip-thumb"></i><i class="caret"></i></div>
            <div class="view-bar">
                <span class="scale">1 : 100</span>
                <div class="view-icons">
                    <svg class="ico"><use href="#v-detail"/></svg>
                    <svg class="ico"><use href="#v-style"/></svg>
                    <svg class="ico"><use href="#v-sun"/></svg>
                    <svg class="ico"><use href="#v-shadow"/></svg>
                    <svg class="ico"><use href="#v-crop"/></svg>
                    <svg class="ico"><use href="#v-cropvis"/></svg>
                    <svg class="ico"><use href="#v-glasses"/></svg>
                    <svg class="ico"><use href="#v-bulb"/></svg>
                    <svg class="ico"><use href="#v-temp"/></svg>
                    <svg class="ico"><use href="#v-anal"/></svg>
                    <svg class="ico"><use href="#v-constr"/></svg>
                </div>
                <div class="hscroll"><i class="caret left"></i><i class="grip-thumb"></i><i class="caret right"></i></div>
            </div>
            <div class="size-grip"></div>
        </section>
    </main>

    <footer class="statusbar">
        <span class="status-text">Připraven</span>
        <div class="status-mid">
            <svg class="ico"><use href="#s-house"/></svg>
            <span class="combo flat"><select aria-label="Pracovní sada" disabled><option></option></select></span>
            <svg class="ico"><use href="#s-req"/></svg>
            <span class="count">:0</span>
            <svg class="ico"><use href="#s-opt"/></svg>
            <svg class="ico"><use href="#s-add"/></svg>
            <span class="combo flat"><select aria-label="Varianta" disabled><option>Hlavní model</option></select></span>
        </div>
        <div class="status-right">
            <svg class="ico"><use href="#s-sel1"/></svg>
            <svg class="ico"><use href="#s-sel2"/></svg>
            <svg class="ico"><use href="#s-sel3"/></svg>
            <svg class="ico"><use href="#s-sel4"/></svg>
            <svg class="ico"><use href="#s-sel5"/></svg>
            <svg class="ico"><use href="#s-gear"/></svg>
            <span class="filter"><svg class="ico"><use href="#s-filter"/></svg>:1</span>
        </div>
    </footer>

    <div class="taskbar">
        <i class="app ie"></i><i class="app folder"></i><i class="app chrome"></i><i class="app doc"></i><i class="app running"></i><i class="desktop"></i>
    </div>

    <!-- Edit assembly dialog -->
    <div class="dialog" role="dialog" aria-labelledby="dialog-title">
        <div class="dialog-title">
            <span id="dialog-title">Upravit skladbu</span>
            <button class="dialog-close" type="button" aria-label="Zavřít"><svg width="12" height="10"><path d="M.5.500h3L6 3 8.500.5h3v1L8.500 5l3 3.500v1h-3L6 7 3.500 9.500h-3v-1L3.500 5l-3-3.500z" fill="#fff" stroke="#4a5566"/></svg></button>
        </div>
        <form class="dialog-body">
            <div class="info">
                <dl>
                    <dt>Rodina:</dt><dd>Základní stěna</dd>
                    <dt>Typ:</dt><dd>Požární stěna - WS 01 (16-75-16)</dd>
                    <dt>Celková tloušťka:</dt><dd>107.0</dd>
                    <dt>Odpor (R):</dt><dd>0.1115 (m²·K)/W</dd>
                    <dt>Tepelná kapacita:</dt><dd>7.98 kJ/K</dd>
                </dl>
                <div class="height-field">
                    <label for="sample-height">Vzorová výška:</label>
                    <input type="text" id="sample-height" value="6000.0">
                </div>
            </div>

            <fieldset class="layers">
                <legend>Vrstvy</legend>
                <p class="side-top">VNĚJŠÍ STRANA</p>
                <div class="table-frame">
                    <table class="layer-table">
                        <colgroup><col class="c-num"><col class="c-text"><col class="c-text"><col class="c-text"><col class="c-wrap"><col></colgroup>
                        <thead>
                            <tr><th></th><th>Funkce</th><th>Materiál</th><th>Tloušťka</th><th>Zalomení</th><th>Konstrukční materiál</th></tr>
                        </thead>
                        <tbody>
                            <tr class="selected"><th>1</th><td>Dokončovací 1 [4]</td><td>CETRIS Basic</td><td>16.0</td><td><input type="checkbox" aria-label="Zalomení 1" checked></td><td class="off"><input type="checkbox" aria-label="Konstrukční materiál 1" disabled></td></tr>
                            <tr class="core"><th>2</th><td>Hranice nosné části</td><td>Vrstvy nad zalomením</td><td>0.0</td><td></td><td></td></tr>
                            <tr><th>3</th><td>Konstrukce [1]</td><td>Profily UW 75, CW 75</td><td>75.0</td><td class="off"><input type="checkbox" aria-label="Zalomení 3" disabled></td><td><input type="checkbox" aria-label="Konstrukční materiál 3" checked></td></tr>
                            <tr class="core"><th>4</th><td>Hranice nosné části</td><td>Vrstvy pod zalomením</td><td>0.0</td><td></td><td></td></tr>
                            <tr><th>5</th><td>Dokončovací 2 [5]</td><td>CETRIS Basic</td><td>16.0</td><td><input type="checkbox" aria-label="Zalomení 5" checked></td><td class="off"><input type="checkbox" aria-label="Konstrukční materiál 5" disabled></td></tr>
                            <tr class="empty"><th></th><td></td><td></td><td></td><td></td><td></td></tr>
                        </tbody>
                    </table>
                </div>
                <p class="side-bottom">VNITŘNÍ STRANA</p>
                <div class="btn-row">
                    <button class="btn" type="button">Vložit</button>
                    <button class="btn" type="button">Vymazat</button>
                    <button class="btn" type="button" disabled>Nahoru</button>
                    <button class="btn" type="button">Dolů</button>
                </div>
            </fieldset>

            <fieldset class="wrapping">
                <legend>Výchozí zalomení</legend>
                <div class="field">
                    <label for="at-inserts">U vložených objektů:</label>
                    <span class="combo"><select id="at-inserts"><option>Vnější</option></select></span>
                </div>
                <div class="field">
                    <label for="at-ends">Na koncích:</label>
                    <span class="combo"><select id="at-ends"><option>Žádná</option></select></span>
                </div>
            </fieldset>

            <fieldset class="vertical">
                <legend>Upravit vertikální skladbu (pouze náhled řezu)</legend>
                <button class="btn" type="button" disabled>Upravit</button>
                <button class="btn" type="button" disabled>Sloučit oblasti</button>
                <button class="btn" type="button" disabled>Přídavky</button>
                <button class="btn" type="button" disabled>Přiřadit vrstvy</button>
                <button class="btn" type="button" disabled>Rozdělit oblast</button>
                <button class="btn" type="button" disabled>Vybrání</button>
            </fieldset>

            <div class="dialog-footer">
                <button class="btn preview" type="button">&lt;&lt; Náhled</button>
                <button class="btn default" type="submit">OK</button>
                <button class="btn" type="button">Storno</button>
                <button class="btn" type="button">Nápověda</button>
            </div>
            <div class="size-grip"></div>
        </form>
    </div>
</body>

</html>
```
FILE: styles.css
```css
/* General Reset */
* {
    margin: 0;
    padding: 0;
    box-sizing: border-box;
}

body {
    display: flex;
    flex-direction: column;
    height: 100vh;
    overflow: hidden;
    background: #f5f5f5;
    color: #000;
    font-family: 'Open Sans', 'Noto Sans', sans-serif;
    font-size: 11px;
    line-height: 14px;
    white-space: nowrap;
}

button,
input,
select {
    font: inherit;
    color: inherit;
}

button {
    background: none;
    border: none;
}

.sprite {
    display: none;
}

.ico {
    width: 16px;
    height: 16px;
    flex: none;
}

.ico18 {
    width: 18px;
    height: 18px;
}

.ico30 {
    width: 30px;
    height: 30px;
    flex: none;
}

/* Small triangles */
.caret {
    flex: none;
    width: 5px;
    height: 3px;
    background: #444;
    clip-path: polygon(0 0, 100% 0, 50% 100%);
}

.caret.wide {
    width: 7px;
    height: 4px;
}

.caret.up {
    clip-path: polygon(50% 0, 100% 100%, 0 100%);
}

.caret.right {
    width: 4px;
    height: 8px;
    clip-path: polygon(0 0, 100% 50%, 0 100%);
}

.caret.left {
    width: 4px;
    height: 8px;
    clip-path: polygon(100% 0, 100% 100%, 0 50%);
}

.caret.dim {
    background: #888;
}

.caret.barred {
    width: 9px;
    height: 8px;
    clip-path: polygon(0 0, 100% 0, 100% 20%, 0 20%, 0 45%, 100% 45%, 50% 100%, 0 45%);
}

.vsep {
    width: 1px;
    height: 22px;
    background: #b5b5b5;
}

/* Title bar */
.titlebar {
    display: flex;
    align-items: center;
    height: 28px;
    padding: 0 6px 5px 5px;
    background: #d4d4d4;
    flex: none;
    color: #2b2b2b;
}

.titlebar .logo {
    height: 18px;
}

.quick {
    display: flex;
    align-items: center;
    gap: 8px;
    margin-left: 12px;
}

.quick .caret {
    margin-left: -1px;
}

.quick .vsep {
    margin: 0 -1px;
}

.app-title {
    display: flex;
    gap: 18px;
    margin: 0 auto;
    font-size: 11px;
    font-weight: 400;
}

.title-right {
    display: flex;
    align-items: center;
    gap: 7px;
}

.search {
    width: 180px;
    height: 22px;
    margin-right: -2px;
    padding: 0 2px;
    border: 1px solid #000;
    font-style: italic;
}

.user-name {
    width: 78px;
}

.title-right .cart {
    margin-left: 4px;
}

.help {
    width: 17px;
    height: 17px;
    border: 1px solid #2a3550;
    border-radius: 50%;
    background: #fff;
    color: #1f55b8;
    font-weight: 700;
    line-height: 15px;
}

.window-buttons {
    display: flex;
    gap: 9px;
    margin-left: 24px;
}

/* Ribbon tabs */
.tabs {
    display: flex;
    align-items: center;
    gap: 2px;
    flex: none;
    height: 20px;
    padding: 0 3px 0 1px;
    background: #d4d4d4;
    color: #2b2b2b;
}

.tab {
    height: 20px;
    padding: 0 10px;
}

.tab.file {
    background: #2a7ab5;
    color: #fff;
}

.tab.active {
    padding: 0 8px;
    background: #e5efd7;
    color: #000;
}

.collapse {
    display: flex;
    align-items: center;
    justify-content: center;
    width: 15px;
    height: 9px;
    margin: 0 3px 0 auto;
    border: 1px solid #777;
    border-radius: 3px;
    background: #eee;
}

/* Ribbon */
.ribbon {
    display: flex;
    flex: none;
    height: 96px;
    padding-left: 2px;
    background: #e5efd7;
    border-bottom: 1px solid #cfcfcf;
}

.panel {
    display: flex;
    flex-direction: column;
    background: #f5f5f5;
    border: 1px solid #e5efd7;
    border-left: 0;
}

.panel-body {
    display: flex;
    height: 75px;
    padding-top: 2px;
    color: #a8a8a8;
}

.panel-title {
    display: flex;
    align-items: center;
    justify-content: center;
    gap: 6px;
    height: 18px;
    color: #333;
}

.panel.context {
    border-color: #f5f5f5;
}

.panel.context .panel-title {
    background: #e5efd7;
}

.p-select {
    width: 59px;
}

.p-props {
    width: 62px;
}

.p-clip {
    width: 81px;
}

.p-geom {
    width: 170px;
}

.p-modify {
    width: 238px;
}

.p-view {
    width: 65px;
}

.p-measure {
    width: 56px;
}

.p-create {
    width: 82px;
}

.p-mode {
    width: 128px;
    margin-left: 4px;
}

.p-wall {
    width: 197px;
}

.big-btn {
    display: flex;
    flex-direction: column;
    align-items: center;
    flex: 1 1 auto;
    height: 72px;
    padding-top: 3px;
    line-height: 15px;
}

.big-btn .ico30 {
    margin-bottom: 5px;
}

.big-btn .caret {
    margin-top: 3px;
    background: #777;
}

.big-btn.selected {
    flex: none;
    width: 44px;
    margin-left: 7px;
    border: 1px solid #4f93d2;
    background: #c8def3;
    color: #9aaabb;
}

.col2 {
    display: grid;
    grid-auto-rows: 36px;
    place-items: center;
    flex: 1;
}

.col2.four {
    flex: none;
    grid-template-columns: repeat(4, 39px);
    margin: 0 2px 0 3px;
}

.col2.two {
    flex: none;
    grid-template-columns: repeat(2, 38px);
    margin-left: 4px;
}

.toggle-on {
    width: 38px;
    height: 35px;
    padding: 2px 3px;
    border: 1px solid #4f93d2;
    background: #c8def3;
}

.col3 {
    display: grid;
    grid-template-columns: 25px;
    grid-template-rows: repeat(3, 24px);
    place-items: center;
    flex: none;
}

.col3.three {
    grid-template-columns: repeat(3, 25px);
}

.col3.labelled {
    grid-template-columns: 98px;
    justify-items: start;
    margin-left: 6px;
}

.row-btn {
    display: flex;
    align-items: center;
    gap: 5px;
}

.row-btn .caret,
.drop .caret {
    margin-left: 2px;
}

.caret.mid {
    align-self: center;
    margin-left: 2px;
}

.drop span {
    display: flex;
    align-items: center;
    gap: 4px;
}

.col3.drop {
    grid-template-columns: 29px;
    justify-items: start;
    margin: 0 2px 0 8px;
}

.options-bar {
    flex: none;
    height: 26px;
    padding: 7px 9px;
}

/* Docked windows */
.workspace {
    display: flex;
    flex: 1;
    min-height: 0;
    gap: 4px;
    background: #f0f0f0;
}

.dock {
    display: flex;
    flex-direction: column;
}

.dock-title {
    display: flex;
    justify-content: space-between;
    align-items: center;
    flex: none;
    height: 20px;
    padding: 0 6px 0 4px;
    background: #bfcddb;
    color: #44505c;
    font-size: 11px;
    font-weight: 400;
}

.dock-title .x {
    width: 9px;
    height: 9px;
    background: #000;
    clip-path: polygon(0 0, 20% 0, 50% 35%, 80% 0, 100% 0, 62% 50%, 100% 100%, 80% 100%, 50% 65%, 20% 100%, 0 100%, 38% 50%);
}

.browser {
    width: 254px;
}

.tree {
    position: relative;
    flex: 1;
    padding-top: 1px;
    margin-right: 2px;
    border-top: 1px solid #777;
    border-left: 1px solid #777;
    border-right: 1px solid #ddd;
    background: #fff;
    font-family: 'Noto Sans', sans-serif;
    list-style: none;
}

.tree::before {
    content: "";
    position: absolute;
    left: 9px;
    top: 12px;
    height: 160px;
    border-left: 1px dotted #999;
}

.tree li {
    position: relative;
    display: flex;
    align-items: center;
    height: 18px;
    padding-left: 5px;
}

.tree li.sub {
    padding-left: 25px;
}

.tree li.sub .dots {
    width: 10px;
}

.tree span {
    padding: 0 3px;
    line-height: 18px;
}

.tree .ico {
    margin-right: 3px;
}

.tree .current {
    background: #e4e4e4;
}

.exp {
    width: 9px;
    height: 9px;
    border: 1px solid #919191;
    background:
        linear-gradient(#2a4a9a, #2a4a9a) center / 5px 1px no-repeat,
        linear-gradient(#2a4a9a, #2a4a9a) center / 1px 5px no-repeat,
        #fff;
}

.exp.open {
    background: linear-gradient(#2a4a9a, #2a4a9a) center / 5px 1px no-repeat, #fff;
}

.noexp {
    width: 9px;
}

.dots {
    width: 7px;
    border-top: 1px dotted #999;
}

/* Properties */
.properties {
    width: 315px;
}

.props-body {
    display: flex;
    flex-direction: column;
    flex: 1;
    border-top: 1px solid #777;
    border-left: 2px solid #777;
    background: #fff;
    font-family: 'Noto Sans', sans-serif;
}

.type-box {
    display: flex;
    align-items: center;
    height: 73px;
    padding: 2px 5px 2px 3px;
    border: 1px solid #d0d0d0;
    background: #f0f0f0;
    color: #444;
    line-height: 16px;
}

.type-box p {
    flex: 1;
    margin-left: 4px;
}

.thumb {
    width: 66px;
    height: 66px;
    border: 1px solid #ddd;
    background:
        linear-gradient(#555, #555) 0 28px / 100% 2px no-repeat,
        linear-gradient(#555, #555) 0 34px / 100% 2px no-repeat,
        linear-gradient(#ddd, #ddd) 0 30px / 100% 4px no-repeat,
        #fff;
}

.filter-row {
    display: flex;
    align-items: center;
    gap: 4px;
    height: 25px;
    background: #f0f0f0;
}

.filter-row .combo {
    width: 218px;
}

.edit-type {
    display: flex;
    align-items: center;
    gap: 4px;
}

.group-head {
    display: flex;
    justify-content: space-between;
    align-items: center;
    height: 17px;
    padding: 0 9px 0 2px;
    background: #dcdcdc;
}

.props-table {
    border-collapse: collapse;
    table-layout: fixed;
    width: 100%;
}

.props-table th,
.props-table td {
    height: 18px;
    padding: 0 2px;
    border: 1px dotted #888;
    border-left: 0;
    font-weight: 400;
    text-align: left;
    line-height: 16px;
}

.props-table th {
    width: 150px;
    padding-left: 8px;
}

.props-table td:nth-child(2) {
    width: 149px;
}

.props-table .editing {
    box-shadow: inset 0 0 0 1px #000;
}

.props-footer {
    display: flex;
    align-items: center;
    justify-content: space-between;
    height: 27px;
    margin-top: auto;
    padding: 0 3px 0 2px;
    background: #f0f0f0;
}

.props-footer a {
    color: #0066cc;
}

.props-footer .btn {
    width: 74px;
}

/* Drawing view */
.view {
    display: grid;
    grid-template-columns: 1fr 18px;
    grid-template-rows: 1fr 18px;
    flex: 1;
    border-top: 2px solid #777;
    border-left: 1px solid #777;
}

.canvas {
    position: relative;
    overflow: hidden;
    background: #fff;
}

.drawing {
    position: absolute;
    inset: 0;
}

.view-buttons {
    position: absolute;
    top: 8px;
    right: 5px;
    display: flex;
    gap: 6px;
}

.navbar {
    position: absolute;
    top: 28px;
    right: 1px;
    display: flex;
    flex-direction: column;
    align-items: center;
    width: 36px;
    height: 118px;
    padding: 2px;
    border: 2px solid #bbb;
    border-radius: 6px;
    background: #f4f4f4;
}

.navbar .wheel {
    position: relative;
    height: 22px;
    margin: 9px 0 6px;
}

.navbar .wheel span {
    position: absolute;
    right: -5px;
    bottom: -4px;
    color: #7a9fca;
    font-size: 8px;
    font-weight: 700;
    line-height: 10px;
}

.navbar .zoom {
    margin: 7px 0 8px;
}

.navbar .caret {
    background: #888;
}

.navbar hr {
    width: 26px;
    margin-top: 4px;
    border: 0;
    border-top: 1px solid #bbb;
}

.nav-dot {
    align-self: flex-end;
    display: flex;
    width: 8px;
    height: 8px;
    border-radius: 50%;
    background: #bbb;
}

.nav-dot.last {
    margin-top: auto;
}

.vscroll {
    display: flex;
    flex-direction: column;
    align-items: center;
    justify-content: space-between;
    margin-right: 2px;
    padding: 7px 0;
    background: #eee;
}

.grip-thumb {
    width: 15px;
    height: 15px;
    border: 1px solid #999;
    border-radius: 2px;
    background: linear-gradient(90deg, #f5f5f5, #d0d0d4);
}

.view-bar {
    display: flex;
    align-items: center;
    background: #f0f0f0;
}

.scale {
    width: 80px;
    padding-left: 25px;
}

.view-icons {
    display: flex;
    gap: 5px;
}

.hscroll {
    display: flex;
    align-items: center;
    justify-content: space-between;
    flex: 1;
    height: 16px;
    margin-left: 4px;
    padding: 0 5px;
    background: #eaeaea;
}

.size-grip {
    width: 8px;
    height: 8px;
    place-self: end;
    background: radial-gradient(circle at 1px 1px, #aaa 1px, transparent 1px) 0 0 / 3px 3px;
    clip-path: polygon(100% 0, 100% 100%, 0 100%);
}

/* Drop-downs */
.combo {
    position: relative;
    display: block;
}

.combo select {
    appearance: none;
    display: block;
    width: 100%;
    height: 21px;
    padding: 0 2px;
    border: 1px solid #707070;
    border-radius: 3px;
    background: linear-gradient(#f2f2f2, #ebebeb 50%, #dddddd 50%, #cfcfcf);
}

.combo::after {
    content: "";
    position: absolute;
    top: 9px;
    right: 4px;
    width: 7px;
    height: 4px;
    background: #000;
    clip-path: polygon(0 0, 100% 0, 50% 100%);
}

.combo.flat {
    width: 205px;
}

.combo.flat select {
    height: 19px;
    border: 1px solid #e0e0e0;
    border-radius: 0;
    background: #fff;
    color: #888;
    opacity: 1;
}

.combo.flat::after {
    background: #aaa;
}

/* Status bar */
.statusbar {
    display: flex;
    align-items: center;
    flex: none;
    height: 26px;
    padding: 0 65px 0 2px;
    border-top: 1px solid #888;
    border-bottom: 2px solid #4c5866;
    background: #d4d4d4;
}

.status-text {
    width: 874px;
}

.status-mid {
    display: flex;
    align-items: center;
    gap: 8px;
}

.count {
    width: 22px;
}

.status-right {
    display: flex;
    align-items: center;
    gap: 10px;
    margin-left: auto;
}

.filter {
    display: flex;
}

.taskbar {
    display: flex;
    flex: none;
    height: 7px;
    padding-left: 83px;
    background: linear-gradient(90deg, #6b7f98, #a6bfdc 30px, #a6bfdc 87%, #7f91a8 90%, #75879d);
}

.app {
    width: 20px;
    margin-top: 3px;
    border-radius: 10px 10px 0 0;
}

.ie {
    background: #e8c23a;
}

.folder {
    width: 15px;
    margin-left: 34px;
    border-radius: 0;
    background: #c9ac68;
}

.chrome {
    margin-left: 113px;
    background: #dd4b3e;
}

.doc {
    width: 14px;
    margin-left: 46px;
    border-radius: 0;
    background: #8e9894;
}

.running {
    width: 60px;
    margin: 0 0 0 24px;
    border: 1px solid #4c5866;
    border-radius: 2px 2px 0 0;
    background: linear-gradient(#4a7fc0, #4a7fc0) 18px 4px / 12px 4px no-repeat, #d5e1ef;
}

.desktop {
    width: 15px;
    margin-left: auto;
    background: #4c5866;
}

/* Dialog */
.dialog {
    position: absolute;
    left: 63px;
    top: 337px;
    width: 848px;
    padding: 0 7px 7px;
    border: 1px solid #454b54;
    border-radius: 6px 6px 0 0;
    background: #d7e4f2;
    background-image: linear-gradient(#bccad9, #d7e4f2 29px);
}

.dialog-title {
    display: flex;
    justify-content: space-between;
    align-items: center;
    height: 29px;
    padding: 6px 2px 0 4px;
    color: #444f5b;
}

.dialog-close {
    display: flex;
    align-items: center;
    justify-content: center;
    width: 31px;
    height: 17px;
    border: 1px solid #8291a8;
    border-radius: 2px;
}

.dialog-body {
    position: relative;
    padding: 6px 32px 13px 19px;
    background: #f0f0f0;
}

.info {
    display: flex;
    justify-content: space-between;
}

.info dl {
    display: grid;
    grid-template-columns: 105px auto;
    line-height: 18px;
}

.height-field {
    display: flex;
    align-items: center;
    gap: 17px;
}

.height-field input {
    width: 72px;
    height: 23px;
    padding: 0 4px 2px;
    border: 1px solid #dde2e8;
    border-top-color: #abadb3;
}

fieldset {
    border: 1px solid #d5dfe5;
    border-radius: 3px;
}

legend {
    margin-left: -2px;
    padding: 0 2px;
    line-height: 10px;
}

.layers {
    margin-top: 10px;
    padding: 0 10px 7px 8px;
}

.side-top {
    line-height: 11px;
    text-align: center;
}

.table-frame {
    margin-top: 3px;
    border: 1px solid #888;
    border-right-color: #fff;
    border-bottom-color: #fff;
    background: #fff;
}

.layer-table {
    width: 100%;
    border-collapse: collapse;
    table-layout: fixed;
}

.c-num {
    width: 27px;
}

.c-text {
    width: 158px;
}

.c-wrap {
    width: 111px;
}

.layer-table th,
.layer-table td {
    height: 18px;
    padding: 0 2px 1px;
    border: 1px dotted #777;
    line-height: 15px;
    text-align: left;
    font-weight: 400;
}

.layer-table thead th,
.layer-table tbody th {
    border: 1px solid #000;
    background: #f0f0f0;
}

.layer-table thead th {
    height: 17px;
    padding: 0;
    border-top-color: #777;
    text-align: center;
}

.layer-table .selected td {
    background: #000;
    color: #fff;
}

.layer-table .core td {
    background: #cfcfcf;
    font-weight: 700;
}

.layer-table .off {
    background: #cfcfcf;
}

.layer-table .selected .off {
    background: #2e2e2e;
}

.layer-table .empty td {
    height: 94px;
}

.layer-table input {
    appearance: none;
    position: relative;
    display: block;
    width: 13px;
    height: 13px;
    margin-top: 2px;
    border: 1px solid #8e8f8f;
    background: #f4f4f4;
}

.layer-table input:checked::after {
    content: "";
    position: absolute;
    left: 4px;
    top: 1px;
    width: 3px;
    height: 6px;
    border: solid #3f5aa8;
    border-width: 0 2px 2px 0;
    transform: rotate(35deg);
}

.layer-table input:disabled {
    border-color: #bbb;
}

.layer-table .selected input {
    background: #111;
    border-color: #666;
}

.layer-table .selected input:checked::after {
    border-color: #d0ac5a;
}

.side-bottom {
    width: 386px;
    line-height: 20px;
    text-align: center;
}

.btn-row {
    display: flex;
    gap: 11px;
    padding: 1px 0 0 1px;
}

.btn {
    width: 88px;
    height: 22px;
    border: 1px solid #707070;
    border-radius: 3px;
    background: linear-gradient(#f2f2f2, #ebebeb 50%, #dddddd 50%, #cfcfcf);
}

.btn:disabled {
    border-color: #adb2b5;
    background: #f4f4f4;
    color: #838383;
}

.btn.default {
    border-color: #3c7fb1;
    box-shadow: inset 0 0 0 1px #4fd0f5;
}

.wrapping {
    display: flex;
    gap: 14px;
    width: 407px;
    margin-top: 12px;
    padding: 5px 9px 6px 8px;
}

.field {
    flex: 1;
    line-height: 16px;
}

.vertical {
    display: grid;
    grid-template-columns: 109px 126px 126px;
    gap: 9px 12px;
    width: 407px;
    margin-top: 11px;
    padding: 10px 9px 9px;
}

.vertical .btn {
    width: 100%;
}

.dialog-footer {
    display: flex;
    gap: 8px;
    margin-top: 7px;
    padding: 0 1px 0 3px;
}

.dialog-footer .preview {
    margin-right: auto;
}

.dialog-body .size-grip {
    position: absolute;
    right: 2px;
    bottom: 2px;
}
```
